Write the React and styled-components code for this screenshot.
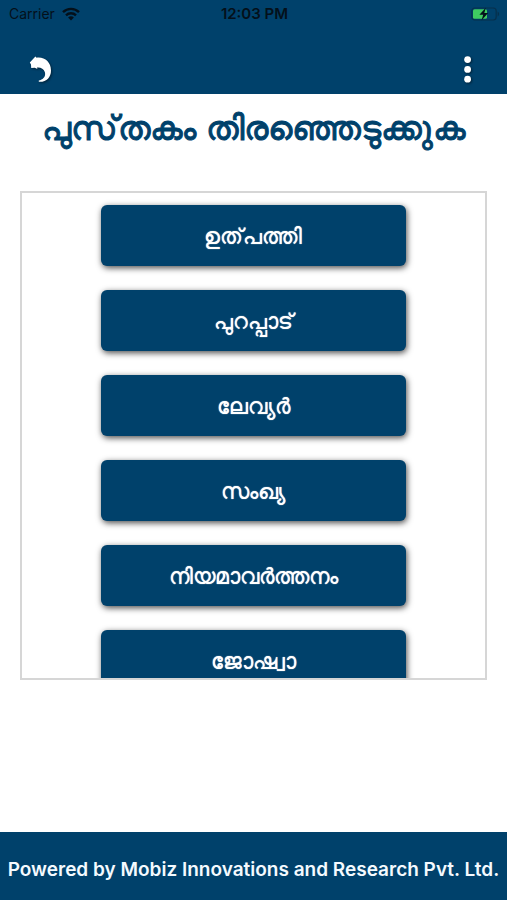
import React from 'react';
import styled, { createGlobalStyle } from 'styled-components';

const GlobalStyle = createGlobalStyle`
  * {
    box-sizing: border-box;
  }

  body {
    margin: 0;
    background: #fff;
    font-family: Inter, 'Noto Sans', sans-serif;
  }
`;

const Page = styled.div`
  min-height: 100vh;
  display: flex;
  flex-direction: column;
`;

const Header = styled.header`
  background: #00416b;
`;

const StatusBar = styled.div`
  height: 28px;
  padding: 0 7px 0 9px;
  display: grid;
  grid-template-columns: 1fr auto 1fr;
  align-items: center;
  color: #04101a;
  line-height: 16px;
`;

const Carrier = styled.span`
  display: flex;
  align-items: center;
  gap: 7px;
  font-size: 14px;
`;

const Clock = styled.span`
  font-size: 15px;
  font-weight: 600;
`;

const Battery = styled.svg`
  justify-self: end;
`;

const Toolbar = styled.nav`
  height: 66px;
  padding: 16px 20px 0;
  display: flex;
  align-items: center;
  justify-content: space-between;
`;

const IconButton = styled.button`
  width: 40px;
  height: 40px;
  padding: 0;
  border: 0;
  background: none;
  cursor: pointer;

  svg {
    display: block;
    fill: #fff;
    filter: drop-shadow(1px 1px 1px rgba(0, 0, 0, 0.5));
  }
`;

const Main = styled.main`
  flex: 1;
  padding: 0 20px;
`;

const Title = styled.h1`
  margin: 14px 0 43px;
  color: #00416b;
  font-size: 34px;
  font-weight: 500;
  line-height: 40px;
  text-align: center;
  white-space: nowrap;
  -webkit-text-stroke: 1px currentColor;
`;

const BookList = styled.ul`
  height: 489px;
  margin: 0;
  padding: 12px 0;
  border: 2px solid #d6d6d6;
  list-style: none;
  display: flex;
  flex-direction: column;
  align-items: center;
  gap: 24px;
  overflow: hidden;
`;

const BookItem = styled.li`
  width: 66%;
  flex-shrink: 0;
`;

const BookButton = styled.button`
  display: block;
  width: 100%;
  height: 61px;
  border: 0;
  border-radius: 6px;
  background: #00416b;
  box-shadow: 1px 2px 6px rgba(0, 0, 0, 0.7);
  color: #fff;
  font-family: inherit;
  font-size: 22px;
  font-weight: 500;
  text-shadow: 0 0 1px #fff;
  cursor: pointer;
`;

const Footer = styled.footer`
  height: 68px;
  padding-top: 6px;
  background: #00416b;
  color: #f4faff;
  display: flex;
  align-items: center;
  justify-content: center;
  font-size: 19px;
  font-weight: 600;
  white-space: nowrap;
`;

const books = [
  'ഉത്\u200cപത്തി',
  'പുറപ്പാട്',
  'ലേവ്യർ',
  'സംഖ്യ',
  'നിയമാവർത്തനം',
  'ജോഷ്വാ',
];

const App = () => {
  return (
    <Page>
      <GlobalStyle />
      <Header>
        <StatusBar>
          <Carrier>
            Carrier
            <svg width='18' height='14' viewBox='0 0 18 14' aria-hidden='true'>
              <g fill='none' stroke='currentColor' strokeWidth='2.4'>
                <path d='M1 5.2C5.5.8 12.5.8 17 5.2' />
                <path d='M4 8.3c2.8-2.7 7.2-2.7 10 0' />
              </g>
              <path d='M9 13.4 6.1 10.4c1.6-1.5 4.2-1.5 5.8 0z' fill='currentColor' />
            </svg>
          </Carrier>
          <Clock>12:03 PM</Clock>
          <Battery width='29' height='14' viewBox='0 0 29 14' aria-hidden='true'>
            <rect x='.8' y='1' width='24.4' height='12' rx='3' fill='none' stroke='#06304c' strokeWidth='1.2' />
            <rect x='2' y='2.2' width='14' height='9.6' rx='1.6' fill='#3fcb61' />
            <path d='M26.6 4.6v4.8c2-.8 2-4 0-4.8z' fill='#06304c' />
            <path d='M14.8.8 8.4 7.7h3.8l-1.6 5.6 6.5-7.2h-3.8z' fill='#04101a' />
          </Battery>
        </StatusBar>
        <Toolbar>
          <IconButton type='button' aria-label='Back'>
            <svg width='40' height='40' viewBox='0 0 40 40'>
              <path d='M9.8 13.4 15.4 7.4l1.2 1.3C24.5 7.6 31 13 31 21.4c0 7-4.8 12-12.2 11.4v-1.3c5-1 7.2-4.7 6-8.6-1.1-3.3-4.2-4.8-7.8-4.4l.4 1.6-2.6-1.3-3.6.2-.2-3.4z' />
            </svg>
          </IconButton>
          <IconButton type='button' aria-label='Menu'>
            <svg width='40' height='40' viewBox='0 0 40 40'>
              <circle cx='20.6' cy='10.6' r='3.4' />
              <circle cx='20.6' cy='20.4' r='3.4' />
              <circle cx='20.6' cy='30.2' r='3.4' />
            </svg>
          </IconButton>
        </Toolbar>
      </Header>
      <Main>
        <Title>{'പുസ്\u200cതകം തിരഞ്ഞെടുക്ക\u200cുക'}</Title>
        <BookList>
          {books.map((book) => (
            <BookItem key={book}>
              <BookButton type='button'>{book}</BookButton>
            </BookItem>
          ))}
        </BookList>
      </Main>
      <Footer>Powered by Mobiz Innovations and Research Pvt. Ltd.</Footer>
    </Page>
  );
};

export default App;
